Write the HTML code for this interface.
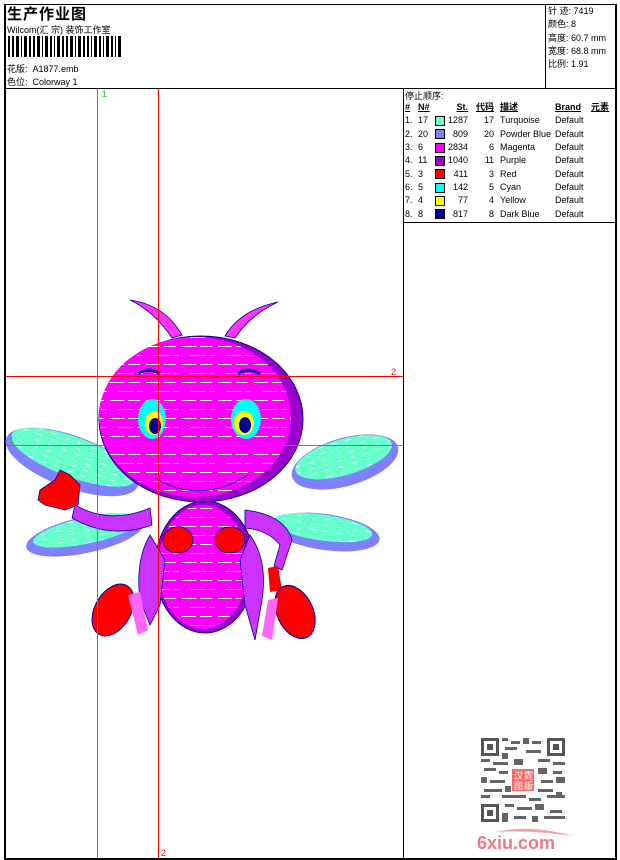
<!DOCTYPE html>
<html><head><meta charset="utf-8"><style>
*{margin:0;padding:0;box-sizing:border-box}
body{width:620px;height:860px;background:#fff;position:relative;overflow:hidden;font-family:"Liberation Sans","Noto Sans CJK SC",sans-serif;font-size:9px;color:#000}
.a{position:absolute;white-space:nowrap}
.ln{position:absolute;background:#000}
.t td{height:13.3px;padding:0;font-size:9px;line-height:13px}
.sw{display:inline-block;width:10px;height:10px;border:1px solid #000;vertical-align:middle}
</style></head><body>
<div class="ln" style="left:4px;top:4px;width:612px;height:1px"></div>
<div class="ln" style="left:4px;top:4px;width:2px;height:855px"></div>
<div class="ln" style="left:615px;top:4px;width:2px;height:855px"></div>
<div class="ln" style="left:4px;top:858px;width:613px;height:2px"></div>
<div class="ln" style="left:4px;top:88px;width:612px;height:1px"></div>
<div class="ln" style="left:545px;top:4px;width:1px;height:84px"></div>
<div class="ln" style="left:403px;top:88px;width:1px;height:771px"></div>
<div class="ln" style="left:403px;top:222px;width:213px;height:1px"></div>

<div class="a" style="left:7px;top:3px;font-size:15px;font-weight:bold;letter-spacing:1px">生产作业图</div>
<div class="a" style="left:7px;top:23px;font-size:9px">Wilcom(汇 宗) 装饰工作室</div>
<svg class="a" style="left:8px;top:36px" width="114" height="21">
<g fill="#000">
<rect x="0" y="0" width="2" height="21"/><rect x="4" y="0" width="2" height="21"/><rect x="8" y="0" width="3" height="21"/><rect x="13" y="0" width="1" height="21"/><rect x="16" y="0" width="3" height="21"/><rect x="21" y="0" width="2" height="21"/><rect x="25" y="0" width="2" height="21"/><rect x="29" y="0" width="3" height="21"/><rect x="34" y="0" width="1" height="21"/><rect x="37" y="0" width="3" height="21"/><rect x="42" y="0" width="2" height="21"/><rect x="46" y="0" width="1" height="21"/><rect x="49" y="0" width="3" height="21"/><rect x="54" y="0" width="2" height="21"/><rect x="58" y="0" width="2" height="21"/><rect x="62" y="0" width="3" height="21"/><rect x="67" y="0" width="1" height="21"/><rect x="70" y="0" width="3" height="21"/><rect x="75" y="0" width="2" height="21"/><rect x="79" y="0" width="2" height="21"/><rect x="83" y="0" width="1" height="21"/><rect x="86" y="0" width="3" height="21"/><rect x="91" y="0" width="2" height="21"/><rect x="95" y="0" width="1" height="21"/><rect x="98" y="0" width="3" height="21"/><rect x="103" y="0" width="2" height="21"/><rect x="107" y="0" width="1" height="21"/><rect x="110" y="0" width="3" height="21"/>
</g></svg>
<div class="a" style="left:7px;top:62px">花版:&nbsp; A1877.emb</div>
<div class="a" style="left:7px;top:75px">色位:&nbsp; Colorway 1</div>

<div class="a" style="left:548px;top:5px;line-height:13.3px">针 迹: 7419<br>颜色: 8<br>高度: 60.7 mm<br>宽度: 68.8 mm<br>比例: 1.91</div>

<div class="a" style="left:405px;top:89px">停止顺序:</div>
<table class="t a" style="left:405px;top:101px;border-collapse:collapse">
<tr style="font-weight:bold;text-decoration:underline"><td style="width:13px">#</td><td style="width:17px">N#</td><td style="width:13px"></td><td style="width:20px;text-align:right">St.</td><td style="width:26px;text-align:right">代码</td><td style="width:61px;padding-left:6px">描述</td><td style="width:36px">Brand</td><td style="padding-left:0">元素</td></tr>
<tr><td>1.</td><td>17</td><td><span class="sw" style="background:#66ffcc"></span></td><td style="text-align:right">1287</td><td style="text-align:right">17</td><td style="padding-left:6px">Turquoise</td><td>Default</td><td></td></tr>
<tr><td>2.</td><td>20</td><td><span class="sw" style="background:#8080ff"></span></td><td style="text-align:right">809</td><td style="text-align:right">20</td><td style="padding-left:6px">Powder Blue</td><td>Default</td><td></td></tr>
<tr><td>3.</td><td>6</td><td><span class="sw" style="background:#ff00ff"></span></td><td style="text-align:right">2834</td><td style="text-align:right">6</td><td style="padding-left:6px">Magenta</td><td>Default</td><td></td></tr>
<tr><td>4.</td><td>11</td><td><span class="sw" style="background:#9900cc"></span></td><td style="text-align:right">1040</td><td style="text-align:right">11</td><td style="padding-left:6px">Purple</td><td>Default</td><td></td></tr>
<tr><td>5.</td><td>3</td><td><span class="sw" style="background:#ff0000"></span></td><td style="text-align:right">411</td><td style="text-align:right">3</td><td style="padding-left:6px">Red</td><td>Default</td><td></td></tr>
<tr><td>6.</td><td>5</td><td><span class="sw" style="background:#00ffff"></span></td><td style="text-align:right">142</td><td style="text-align:right">5</td><td style="padding-left:6px">Cyan</td><td>Default</td><td></td></tr>
<tr><td>7.</td><td>4</td><td><span class="sw" style="background:#ffff00"></span></td><td style="text-align:right">77</td><td style="text-align:right">4</td><td style="padding-left:6px">Yellow</td><td>Default</td><td></td></tr>
<tr><td>8.</td><td>8</td><td><span class="sw" style="background:#000099"></span></td><td style="text-align:right">817</td><td style="text-align:right">8</td><td style="padding-left:6px">Dark Blue</td><td>Default</td><td></td></tr>
</table>

<svg class="a" style="left:0;top:0" width="403" height="858">
<defs>
<pattern id="st" width="36" height="18" patternUnits="userSpaceOnUse"><rect width="36" height="18" fill="#ff00ff"/><rect x="2" y="4" width="14" height="1" fill="#fff"/><rect x="20" y="4" width="12" height="1" fill="#fff"/><rect x="10" y="13" width="16" height="1" fill="#fff"/><rect x="29" y="13" width="6" height="1" fill="#fff"/></pattern>
<pattern id="wt" width="14" height="6" patternUnits="userSpaceOnUse"><rect width="14" height="6" fill="#66ffcc"/><rect x="1" y="3" width="5" height="1" fill="#e8fff6"/></pattern>
</defs>
<g transform="rotate(20 72 462)"><ellipse cx="72" cy="462" rx="70" ry="26" fill="#8080ff"/><ellipse cx="72" cy="457" rx="66" ry="20" fill="url(#wt)"/></g>
<g transform="rotate(-16 345 462)"><ellipse cx="345" cy="462" rx="55" ry="24" fill="#8080ff"/><ellipse cx="345" cy="457" rx="50" ry="18" fill="url(#wt)"/></g>
<g transform="rotate(-12 85 535)"><ellipse cx="85" cy="535" rx="60" ry="18" fill="#8080ff"/><ellipse cx="88" cy="531" rx="55" ry="13" fill="url(#wt)"/></g>
<g transform="rotate(8 325 532)"><ellipse cx="325" cy="532" rx="55" ry="18" fill="#8080ff"/><ellipse cx="322" cy="528" rx="50" ry="13" fill="url(#wt)"/></g>
<path d="M130 300 Q165 305 182 335 L172 338 Q155 312 130 300Z" fill="#ff33ff" stroke="#000099" stroke-width="0.8"/>
<path d="M278 302 Q240 310 225 336 L235 338 Q250 315 278 302Z" fill="#ff33ff" stroke="#000099" stroke-width="0.8"/>
<path d="M75 505 Q110 525 150 508 L152 525 Q110 540 72 518Z" fill="#cc33ff" stroke="#000099" stroke-width="0.8"/>
<path d="M40 490 L55 480 L60 470 L70 475 L80 485 L78 505 L65 510 L45 505 L38 500Z" fill="#ff0000" stroke="#000099" stroke-width="0.8"/>
<ellipse cx="205" cy="567" rx="50" ry="66" fill="#9900cc" stroke="#000099"/>
<ellipse cx="203" cy="567" rx="45" ry="62" fill="url(#st)"/>
<path d="M245 510 Q285 515 292 540 L282 570 L274 566 L280 545 Q268 530 245 528Z" fill="#cc33ff" stroke="#000099" stroke-width="0.8"/>
<path d="M268 568 L278 566 L282 590 L270 592Z" fill="#ff0000"/>
<path d="M150 535 Q135 560 140 600 L150 625 L160 605 L165 560Z" fill="#cc33ff" stroke="#000099" stroke-width="0.8"/>
<path d="M250 535 Q268 560 262 600 L255 640 L245 605 L240 560Z" fill="#cc33ff" stroke="#000099" stroke-width="0.8"/>
<ellipse cx="113" cy="610" rx="18" ry="28" transform="rotate(30 113 610)" fill="#ff0000" stroke="#000099"/>
<ellipse cx="295" cy="612" rx="18" ry="28" transform="rotate(-25 295 612)" fill="#ff0000" stroke="#000099"/>
<path d="M128 595 L140 592 L148 630 L138 635Z" fill="#ff66ff"/>
<path d="M268 600 L278 598 L272 640 L262 636Z" fill="#ff66ff"/>
<ellipse cx="201" cy="419" rx="102" ry="83" fill="#9900cc" stroke="#000099"/>
<ellipse cx="195" cy="417" rx="96" ry="80" fill="url(#st)"/>
<ellipse cx="152" cy="419" rx="14" ry="20" fill="#00ffff"/>
<ellipse cx="154" cy="423" rx="9" ry="12" fill="#ffff00"/>
<ellipse cx="155" cy="426" rx="6" ry="8" fill="#000099"/>
<ellipse cx="246" cy="419" rx="15" ry="20" fill="#00ffff"/>
<ellipse cx="244" cy="423" rx="10" ry="12" fill="#ffff00"/>
<ellipse cx="245" cy="425" rx="6" ry="8" fill="#000099"/>
<path d="M138 374 Q148 366 160 374" stroke="#000099" stroke-width="3" fill="none"/>
<path d="M238 374 Q248 366 260 374" stroke="#000099" stroke-width="3" fill="none"/>
<path d="M155 478 Q200 505 248 475" stroke="#000099" fill="none"/>
<ellipse cx="178" cy="540" rx="15" ry="13" fill="#ff0000" stroke="#000099"/>
<ellipse cx="230" cy="540" rx="15" ry="13" fill="#ff0000" stroke="#000099"/>
<rect x="97" y="89" width="1" height="769" fill="#00cc00"/>
<rect x="6" y="445" width="397" height="1" fill="#00cc00"/>
<rect x="158" y="89" width="1" height="769" fill="#ff0000"/>
<rect x="6" y="376" width="397" height="1" fill="#ff0000"/>
<text x="102" y="97" font-size="9" fill="#00cc00" font-family="Liberation Sans">1</text>
<text x="9" y="443" font-size="9" fill="#00cc00" font-family="Liberation Sans">1</text>
<text x="391" y="375" font-size="9" fill="#ff0000" font-family="Liberation Sans">2</text>
<text x="161" y="856" font-size="9" fill="#ff0000" font-family="Liberation Sans">2</text>
</svg>

<svg class="a" style="left:481px;top:738px" width="84" height="84">
<rect width="84" height="84" fill="#fff"/>
<g fill="#555">
<rect x="0" y="0" width="18" height="18"/><rect x="66" y="0" width="18" height="18"/><rect x="0" y="66" width="18" height="18"/>
</g>
<g fill="#fff"><rect x="3" y="3" width="12" height="12"/><rect x="69" y="3" width="12" height="12"/><rect x="3" y="69" width="12" height="12"/></g>
<g fill="#555"><rect x="6" y="6" width="6" height="6"/><rect x="72" y="6" width="6" height="6"/><rect x="6" y="72" width="6" height="6"/></g>
<g fill="#555" opacity="0.9">
<rect x="21" y="0" width="6" height="3"/><rect x="30" y="3" width="9" height="3"/><rect x="42" y="0" width="6" height="6"/><rect x="51" y="3" width="9" height="3"/><rect x="24" y="9" width="12" height="3"/><rect x="45" y="12" width="15" height="3"/><rect x="21" y="15" width="6" height="6"/>
<rect x="0" y="21" width="9" height="3"/><rect x="12" y="24" width="15" height="3"/><rect x="33" y="21" width="9" height="6"/><rect x="57" y="21" width="12" height="3"/><rect x="72" y="24" width="12" height="3"/>
<rect x="3" y="30" width="12" height="3"/><rect x="18" y="33" width="9" height="3"/><rect x="57" y="30" width="9" height="6"/><rect x="72" y="33" width="9" height="3"/>
<rect x="0" y="39" width="6" height="6"/><rect x="9" y="42" width="15" height="3"/><rect x="60" y="42" width="12" height="3"/><rect x="75" y="39" width="9" height="6"/>
<rect x="3" y="51" width="18" height="3"/><rect x="24" y="48" width="6" height="6"/><rect x="57" y="51" width="15" height="3"/><rect x="75" y="54" width="6" height="3"/>
<rect x="0" y="57" width="9" height="3"/><rect x="21" y="57" width="24" height="3"/><rect x="48" y="60" width="12" height="3"/><rect x="66" y="57" width="18" height="3"/>
<rect x="24" y="66" width="9" height="3"/><rect x="36" y="69" width="15" height="3"/><rect x="54" y="66" width="9" height="6"/><rect x="69" y="72" width="12" height="3"/>
<rect x="21" y="75" width="6" height="9"/><rect x="33" y="78" width="12" height="3"/><rect x="51" y="78" width="6" height="6"/><rect x="63" y="78" width="21" height="3"/>
</g>
<rect x="31" y="31" width="22" height="22" fill="#f26b6b"/>
<text x="33" y="41" font-size="9" fill="#fff" font-family="Noto Sans CJK SC">汉</text>
<text x="43" y="41" font-size="9" fill="#fff" font-family="Noto Sans CJK SC">霓</text>
<text x="33" y="51" font-size="9" fill="#fff" font-family="Noto Sans CJK SC">图</text>
<text x="43" y="51" font-size="9" fill="#fff" font-family="Noto Sans CJK SC">版</text>
</svg>
<svg class="a" style="left:475px;top:826px" width="100" height="26">
<path d="M20 6 Q55 -2 98 10 Q55 4 20 6Z" fill="#f5a0a8"/>
<text x="2" y="23" font-size="18" font-weight="bold" fill="#f07884" font-family="Liberation Sans">6xiu.com</text>
</svg>
</body></html>
